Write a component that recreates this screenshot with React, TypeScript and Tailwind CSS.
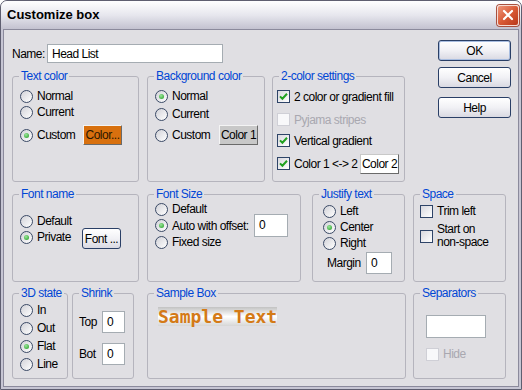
import type { ReactNode } from "react";

const UI = "font-['Liberation_Sans',sans-serif] text-[12px] tracking-[-0.5px] leading-[16px] text-black";

function Group({ title, className = "", children }: { title: string; className?: string; children?: ReactNode }) {
  return (
    <fieldset className={`border border-[#b5b4bd] rounded-[3px] min-w-0 shrink-0 ${className}`}>
      <legend className="ml-[6px] px-[2px] text-[#0046d5] leading-[14px] whitespace-nowrap">{title}</legend>
      {children}
    </fieldset>
  );
}

function Radio({ checked = false, label, className = "" }: { checked?: boolean; label: ReactNode; className?: string }) {
  return (
    <div className={`flex items-center gap-[4px] ${className}`}>
      <span className="w-[13px] h-[13px] shrink-0 rounded-full border border-[#3b4a66] bg-linear-to-br from-[#d2d2d8] to-white flex items-center justify-center">
        {checked && <span className="w-[5px] h-[5px] rounded-full bg-[radial-gradient(circle_at_40%_35%,#9be69b,#1f9a1f)]" />}
      </span>
      <span className="whitespace-nowrap">{label}</span>
    </div>
  );
}

function Check({ checked = false, disabled = false, label, className = "" }: { checked?: boolean; disabled?: boolean; label: ReactNode; className?: string }) {
  return (
    <div className={`flex items-center gap-[4px] ${disabled ? "text-[#a9a8b0]" : ""} ${className}`}>
      <span
        className={`w-[13px] h-[13px] shrink-0 border flex items-center justify-center ${
          disabled ? "border-[#cfcfd6] bg-[#f8f8fa]" : "border-[#2e4468] bg-linear-to-br from-[#d8d8de] to-white"
        }`}
      >
        {checked && (
          <svg width="9" height="9" viewBox="0 0 9 9">
            <path d="M1 4.4 L3.4 6.8 L8 1.8" fill="none" stroke="#21a121" strokeWidth="2" />
          </svg>
        )}
      </span>
      <span className="whitespace-nowrap">{label}</span>
    </div>
  );
}

function XpButton({ children, className = "", isDefault = false }: { children: ReactNode; className?: string; isDefault?: boolean }) {
  return (
    <div
      className={`shrink-0 rounded-[3px] border border-[#2a3f66] bg-linear-to-b from-white via-[#f1f1f5] to-[#d9d9e2] flex items-center justify-center whitespace-nowrap ${
        isDefault ? "shadow-[inset_0_0_0_1px_#a8bde0]" : ""
      } ${className}`}
    >
      {children}
    </div>
  );
}

function ColorButton({ children, className = "" }: { children: ReactNode; className?: string }) {
  return (
    <div className={`shrink-0 whitespace-nowrap border border-t-[#f4f4f4] border-l-[#f4f4f4] border-r-[#6a6a6a] border-b-[#6a6a6a] flex items-center justify-center ${className}`}>
      {children}
    </div>
  );
}

function Input({ children, className = "" }: { children?: ReactNode; className?: string }) {
  return <div className={`shrink-0 border border-[#a5acb2] bg-white pl-[4px] pt-[2px] ${className}`}>{children}</div>;
}

export default function App() {
  return (
    <div className={`w-[522px] h-[390px] ${UI}`}>
      <div className="w-full h-full border border-[#5e5e70] rounded-t-[7px] bg-[#c6c5d3] flex flex-col overflow-hidden">
        <div className="h-[28px] shrink-0 flex items-center justify-between pl-[6px] pr-[2px] bg-linear-to-b from-[#fefeff] via-[#e7e7ee] to-[#c3c2d0]">
          <span className="font-bold text-[13px] tracking-normal">Customize box</span>
          <div className="w-[22px] h-[21px] rounded-[3px] border border-[#f6dcd4] bg-linear-to-br from-[#ec957a] via-[#d95a36] to-[#b9381a] flex items-center justify-center shadow-[0_0_0_1px_#a8503f]">
            <svg width="12" height="12" viewBox="0 0 12 12">
              <path d="M2 2 L10 10 M10 2 L2 10" stroke="white" strokeWidth="2.2" strokeLinecap="round" />
            </svg>
          </div>
        </div>

        <div className="flex-1 mx-[2px] mb-[2px] border border-[#8b8a9c] bg-[#e0dfe3] pl-[8px] pt-[10px]">
          <div className="flex items-start">
            <div className="mt-[4px]">
              <div className="flex items-center h-[19px]">
                <span className="w-[35px]">Name:</span>
                <Input className="w-[176px] h-[19px] !pt-[1px]">Head List</Input>
              </div>
              <div className="mt-[6px] flex">
                <Group title="Text color" className="w-[127px] h-[113px]">
                  <div className="pl-[7px] pt-[5px]">
                    <Radio label="Normal" className="h-[16px]" />
                    <Radio label="Current" className="h-[16px]" />
                    <div className="mt-[5px] h-[20px] flex items-center">
                      <Radio checked label="Custom" className="w-[63px]" />
                      <ColorButton className="w-[39px] h-[20px] bg-[#d8700e] text-[#2a1600]">Color...</ColorButton>
                    </div>
                  </div>
                </Group>
                <Group title="Background color" className="ml-[8px] w-[118px] h-[113px]">
                  <div className="pl-[7px] pt-[5px]">
                    <Radio checked label="Normal" className="h-[16px]" />
                    <Radio label="Current" className="mt-[2px] h-[16px]" />
                    <div className="mt-[3px] h-[20px] flex items-center">
                      <Radio label="Custom" className="w-[64px]" />
                      <ColorButton className="w-[39px] h-[20px] bg-[#c8c8c8]">Color 1</ColorButton>
                    </div>
                  </div>
                </Group>
                <Group title="2-color settings" className="ml-[7px] w-[133px] h-[113px]">
                  <div className="pl-[4px] pt-[5px]">
                    <Check checked label="2 color or gradient fill" className="h-[17px]" />
                    <Check disabled label="Pyjama stripes" className="mt-[6px] h-[17px]" />
                    <Check checked label="Vertical gradient" className="mt-[4px] h-[17px]" />
                    <div className="mt-[5px] h-[19px] flex items-center">
                      <Check checked label="Color 1 <-> 2" className="w-[83px]" />
                      <ColorButton className="w-[39px] h-[20px] bg-white !border-t-[#c8c8c8] !border-l-[#c8c8c8]">Color 2</ColorButton>
                    </div>
                  </div>
                </Group>
              </div>
            </div>

            <div className="ml-[33px] flex flex-col">
              <XpButton isDefault className="w-[73px] h-[21px]">OK</XpButton>
              <XpButton className="mt-[6px] w-[73px] h-[21px]">Cancel</XpButton>
              <XpButton className="mt-[9px] w-[73px] h-[21px]">Help</XpButton>
            </div>
          </div>

          <div className="mt-[5px] flex">
            <Group title="Font name" className="w-[127px] h-[95px]">
              <div className="flex pl-[7px]">
                <div className="pt-[12px] w-[62px]">
                  <Radio label="Default" className="h-[16px]" />
                  <Radio checked label="Private" className="h-[16px]" />
                </div>
                <XpButton className="mt-[27px] w-[39px] h-[21px]">Font ...</XpButton>
              </div>
            </Group>
            <Group title="Font Size" className="ml-[8px] w-[154px] h-[95px]">
              <div className="pl-[7px]">
                <Radio label="Default" className="h-[16px]" />
                <div className="h-[17px] flex items-center">
                  <Radio checked label="Auto with offset:" className="w-[99px]" />
                  <Input className="w-[34px] h-[23px]">0</Input>
                </div>
                <Radio label="Fixed size" className="h-[16px]" />
              </div>
            </Group>
            <Group title="Justify text" className="ml-[11px] w-[93px] h-[95px]">
              <div className="pl-[10px] pt-[2px]">
                <Radio label="Left" className="h-[16px]" />
                <Radio checked label="Center" className="h-[16px]" />
                <Radio label="Right" className="h-[16px]" />
              </div>
              <div className="mt-[1px] pl-[14px] flex items-center h-[22px]">
                <span className="w-[39px]">Margin</span>
                <Input className="w-[26px] h-[22px]">0</Input>
              </div>
            </Group>
            <Group title="Space" className="ml-[8px] w-[93px] h-[95px]">
              <div className="pl-[6px] pt-[2px]">
                <Check label="Trim left" className="h-[16px]" />
                <Check
                  label={
                    <>
                      Start on
                      <br />
                      non-space
                    </>
                  }
                  className="mt-[4px] leading-[13px]"
                />
              </div>
            </Group>
          </div>

          <div className="mt-[4px] flex">
            <Group title="3D state" className="w-[56px] h-[93px]">
              <div className="pl-[7px] pt-[1px]">
                <Radio label="In" className="h-[18px]" />
                <Radio label="Out" className="h-[18px]" />
                <Radio checked label="Flat" className="h-[18px]" />
                <Radio label="Line" className="h-[18px]" />
              </div>
            </Group>
            <Group title="Shrink" className="ml-[4px] w-[62px] h-[93px]">
              <div className="pl-[6px] pt-[11px]">
                <div className="flex items-center h-[22px]">
                  <span className="w-[23px]">Top</span>
                  <Input className="w-[23px] h-[22px]">0</Input>
                </div>
                <div className="mt-[10px] flex items-center h-[22px]">
                  <span className="w-[23px]">Bot</span>
                  <Input className="w-[23px] h-[22px]">0</Input>
                </div>
              </div>
            </Group>
            <Group title="Sample Box" className="ml-[13px] w-[259px] h-[93px]">
              <div className="pl-[10px] pt-[7px]">
                <span className="inline-block font-['DejaVu_Sans_Mono',monospace] font-bold tracking-normal text-[18px] leading-[19px] text-[#d47a17] bg-linear-to-b from-[#c2c2c2] via-white to-[#d6d6d6]">
                  Sample Text
                </span>
              </div>
            </Group>
            <Group title="Separators" className="ml-[7px] w-[93px] h-[93px]">
              <div className="pl-[12px] pt-[15px]">
                <Input className="w-[60px] h-[23px]" />
                <Check disabled label="Hide" className="mt-[8px] h-[16px]" />
              </div>
            </Group>
          </div>
        </div>
      </div>
    </div>
  );
}
